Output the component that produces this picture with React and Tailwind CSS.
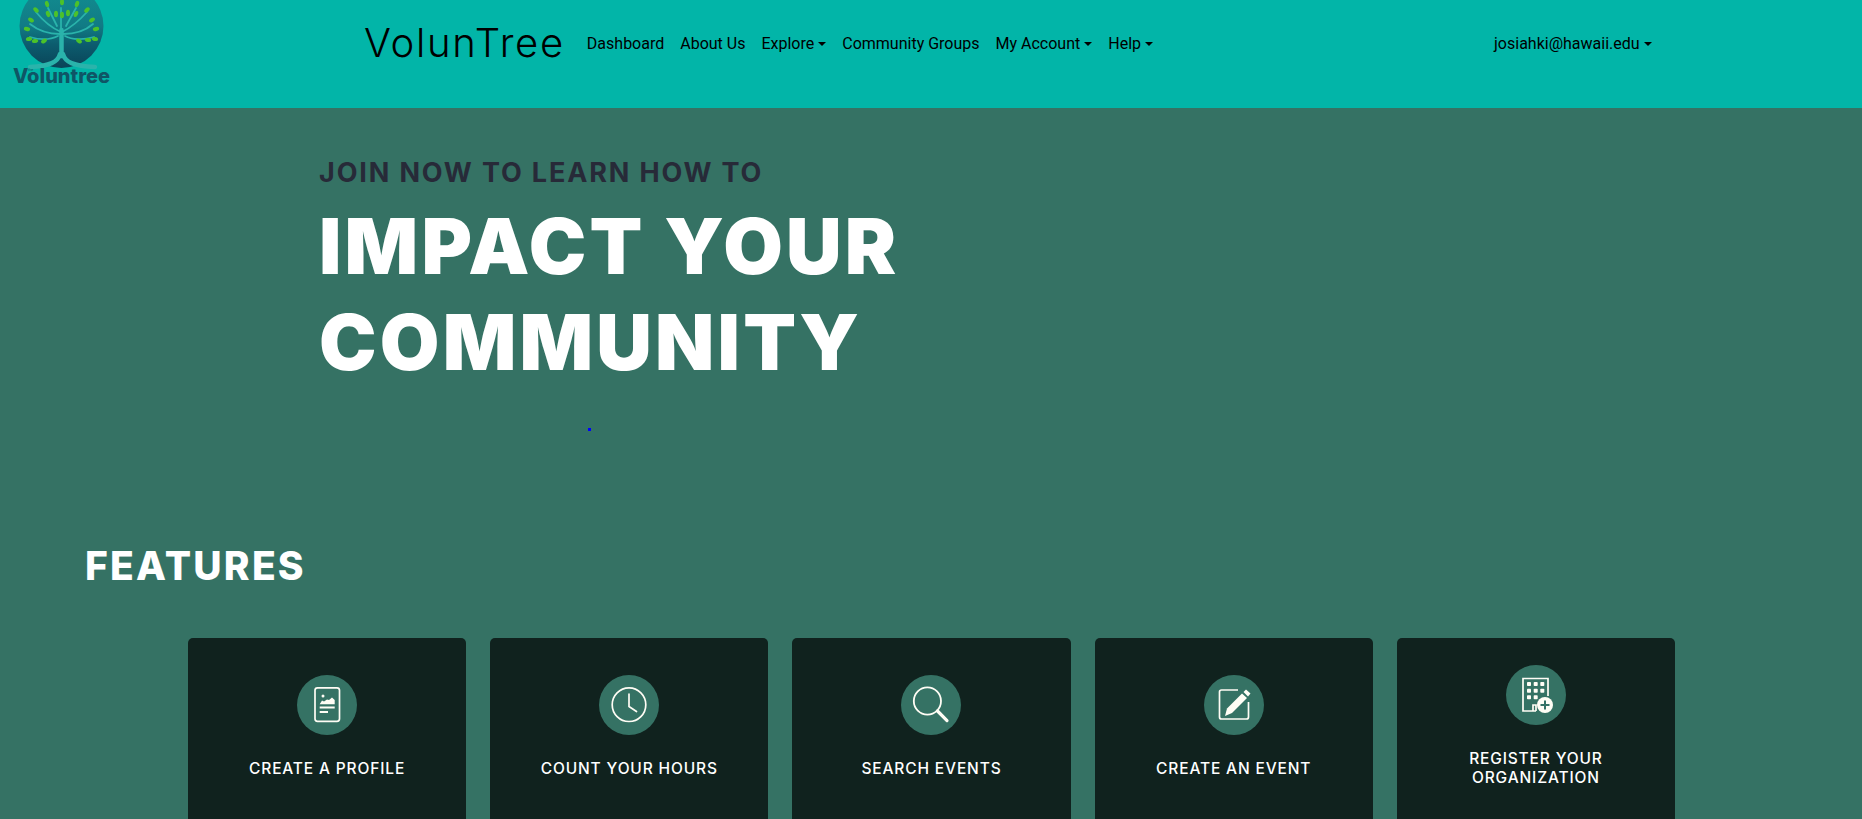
const navLinks = [
  { label: "Dashboard" },
  { label: "About Us" },
  { label: "Explore", caret: true },
  { label: "Community Groups" },
  { label: "My Account", caret: true },
  { label: "Help", caret: true },
];

function Caret() {
  return (
    <span className="inline-block ml-[4px] align-[3px] w-0 h-0 border-t-[4px] border-x-[4px] border-t-black border-x-transparent" />
  );
}

function Logo() {
  const leaves = [
    [47, 4, -15], [62, 2, 0], [77, 4, 20], [36, 10, -45], [87, 10, 45],
    [48, 14, -20], [56, 14, 0], [62, 15, 0], [68, 13, 0], [76, 14, 25],
    [31, 20, -55], [92, 20, 55], [27, 29, -75], [96, 29, 75], [29, 39, 80],
    [35, 41, 80], [44, 41, 55], [79, 41, -55], [88, 40, -80], [95, 39, -80],
  ];
  return (
    <svg width="130" height="100" viewBox="0 0 130 100" className="block shrink-0">
      <defs>
        <linearGradient id="ball" x1="0" y1="0" x2="0" y2="1">
          <stop offset="0" stopColor="#128f92" />
          <stop offset="0.5" stopColor="#117b85" />
          <stop offset="0.72" stopColor="#0c5c6e" />
          <stop offset="1" stopColor="#0a4458" />
        </linearGradient>
      </defs>
      <circle cx="61.5" cy="26" r="42" fill="url(#ball)" />
      <g fill="none" stroke="#2ab3ab" strokeLinecap="round">
        <path d="M61.5 30 V56 M60 54 C58 62 50 66 30 67 M63 54 C65 62 73 66 95 67" strokeWidth="4.5" />
        <path d="M61 32 C52 28 44 22 36 12 M62 32 C70 28 78 22 87 12 M60 34 C50 34 40 32 30 24 M63 34 C72 34 84 32 93 24 M61 30 V8 M57 26 L48 8 M66 26 L76 8" strokeWidth="1.8" />
        <path d="M58 36 C50 40 40 40 30 37 M65 36 C72 40 84 40 94 37" strokeWidth="1.8" />
      </g>
      <g fill="#4cc22a">
        {leaves.map(([x, y, r], i) => (
          <ellipse key={i} cx={x} cy={y} rx="2" ry="3.2" transform={`rotate(${r} ${x} ${y})`} />
        ))}
      </g>
      <text x="13" y="83" fill="#0f5566" fontSize="20" fontWeight="800" className="font-['Inter',sans-serif]">
        Voluntree
      </text>
      <text x="28" y="71" fill="#0f5566" fontSize="3.5" className="font-['Inter',sans-serif]">
        the
      </text>
    </svg>
  );
}

function ProfileIcon() {
  return (
    <svg viewBox="0 0 60 60" className="w-[60px] h-[60px]">
      <rect x="18" y="12.8" width="24.5" height="33.5" rx="2.5" fill="none" stroke="#fffdf5" strokeWidth="1.7" />
      <circle cx="26" cy="21" r="1.5" fill="#fffdf5" />
      <path d="M22.7 29.3 L25 25.5 L27 26.5 L30 24.5 L32 25 L35 22.5 L37.7 25 V29.3 Z" fill="#fffdf5" />
      <path d="M22.7 32.5 H37.7 M22.7 37 H31" stroke="#fffdf5" strokeWidth="1.8" />
    </svg>
  );
}

function ClockIcon() {
  return (
    <svg viewBox="0 0 60 60" className="w-[60px] h-[60px]">
      <g fill="none" stroke="#fffdf5" strokeWidth="1.7">
        <circle cx="30" cy="29.7" r="16.8" />
        <path d="M30 19 V31.5 L37.5 36.5" strokeLinecap="round" />
      </g>
    </svg>
  );
}

function SearchIcon() {
  return (
    <svg viewBox="0 0 60 60" className="w-[60px] h-[60px]">
      <circle cx="26.4" cy="26" r="13.6" fill="none" stroke="#fffdf5" strokeWidth="1.8" />
      <path d="M36.5 36 L46 45.6" stroke="#fffdf5" strokeWidth="3.2" strokeLinecap="round" />
    </svg>
  );
}

function EditIcon() {
  return (
    <svg viewBox="0 0 60 60" className="w-[60px] h-[60px]">
      <path d="M34 15 H17.5 A2 2 0 0 0 15.5 17 V42 A2 2 0 0 0 17.5 44 H42.5 A2 2 0 0 0 44.5 42 V27" fill="none" stroke="#fffdf5" strokeWidth="1.7" />
      <path d="M21 41 L23 33.5 L38 18.5 L43 23 L28 38 Z" fill="#fffdf5" />
      <path d="M39.5 17 L42 14.5 L46.5 18.5 L44 21.5 Z" fill="#fffdf5" />
    </svg>
  );
}

function OrgIcon() {
  const spots = [23, 29.7, 36.3];
  const rows = [19, 25.7, 32.3];
  return (
    <svg viewBox="0 0 60 60" className="w-[60px] h-[60px]">
      <path d="M30 46 H17 V13.5 H42 V31 M30 46 V40 H27 V46" fill="none" stroke="#fffdf5" strokeWidth="1.7" />
      {rows.map((y, r) =>
        spots.slice(0, r === 2 ? 2 : 3).map((x) => (
          <rect key={`${x}-${y}`} x={x - 2} y={y - 2} width="4" height="4" rx="0.8" fill="#fffdf5" />
        ))
      )}
      <circle cx="39" cy="40" r="8" fill="#fffdf5" />
      <path d="M39 35.5 V44.5 M34.5 40 H43.5" stroke="#367265" strokeWidth="2" />
    </svg>
  );
}

const features = [
  { label: "CREATE A PROFILE", icon: <ProfileIcon /> },
  { label: "COUNT YOUR HOURS", icon: <ClockIcon /> },
  { label: "SEARCH EVENTS", icon: <SearchIcon /> },
  { label: "CREATE AN EVENT", icon: <EditIcon /> },
  { label: "REGISTER YOUR ORGANIZATION", icon: <OrgIcon /> },
];

function App() {
  return (
    <div className="h-screen overflow-hidden bg-[#357264] font-['Inter',sans-serif]">
      <nav className="h-[108px] bg-[#02b5a8] flex items-start overflow-hidden">
        <Logo />
        <a className="ml-[234px] mt-[18px] text-[40px] leading-[50px] font-light tracking-[1.7px] text-black whitespace-nowrap">
          VolunTree
        </a>
        <ul className="ml-[14px] mt-[32px] flex font-['Roboto',sans-serif] text-[16px] leading-[24px] text-black">
          {navLinks.map((link) => (
            <li key={link.label} className="px-[8px] whitespace-nowrap">
              {link.label}
              {link.caret && <Caret />}
            </li>
          ))}
        </ul>
        <div className="ml-[333px] mt-[32px] font-['Roboto',sans-serif] text-[16px] leading-[24px] text-black whitespace-nowrap">
          josiahki@hawaii.edu
          <Caret />
        </div>
      </nav>

      <section className="pl-[319px] pt-[48px]">
        <h3 className="text-[27px] leading-[34px] font-bold tracking-[1.85px] text-[#272a38] uppercase">
          Join now to learn how to
        </h3>
        <h1 className="mt-[8px] text-[77px] leading-[96px] font-black tracking-[3.2px] text-white uppercase w-[640px]">
          Impact your community
        </h1>
        <div className="ml-[269px] mt-[38px] w-[3px] h-[3px] bg-[#0000ff]" />
      </section>

      <h2 className="ml-[85px] mt-[111px] text-[39px] leading-[48px] font-extrabold tracking-[2.2px] text-white uppercase">
        Features
      </h2>

      <div className="ml-[188px] mt-[48px] w-[1487px] grid grid-cols-5 gap-[24px]">
        {features.map((feature) => (
          <div
            key={feature.label}
            className="h-[240px] pb-[64px] rounded-[5px] bg-[#10221e] flex flex-col items-center justify-center text-center"
          >
            <div className="w-[60px] h-[60px] rounded-full bg-[#357264]">{feature.icon}</div>
            <p className="mt-[24px] w-[230px] text-[15.5px] leading-[19px] font-medium tracking-[0.85px] text-white">
              {feature.label}
            </p>
          </div>
        ))}
      </div>
    </div>
  );
}

export default App;
